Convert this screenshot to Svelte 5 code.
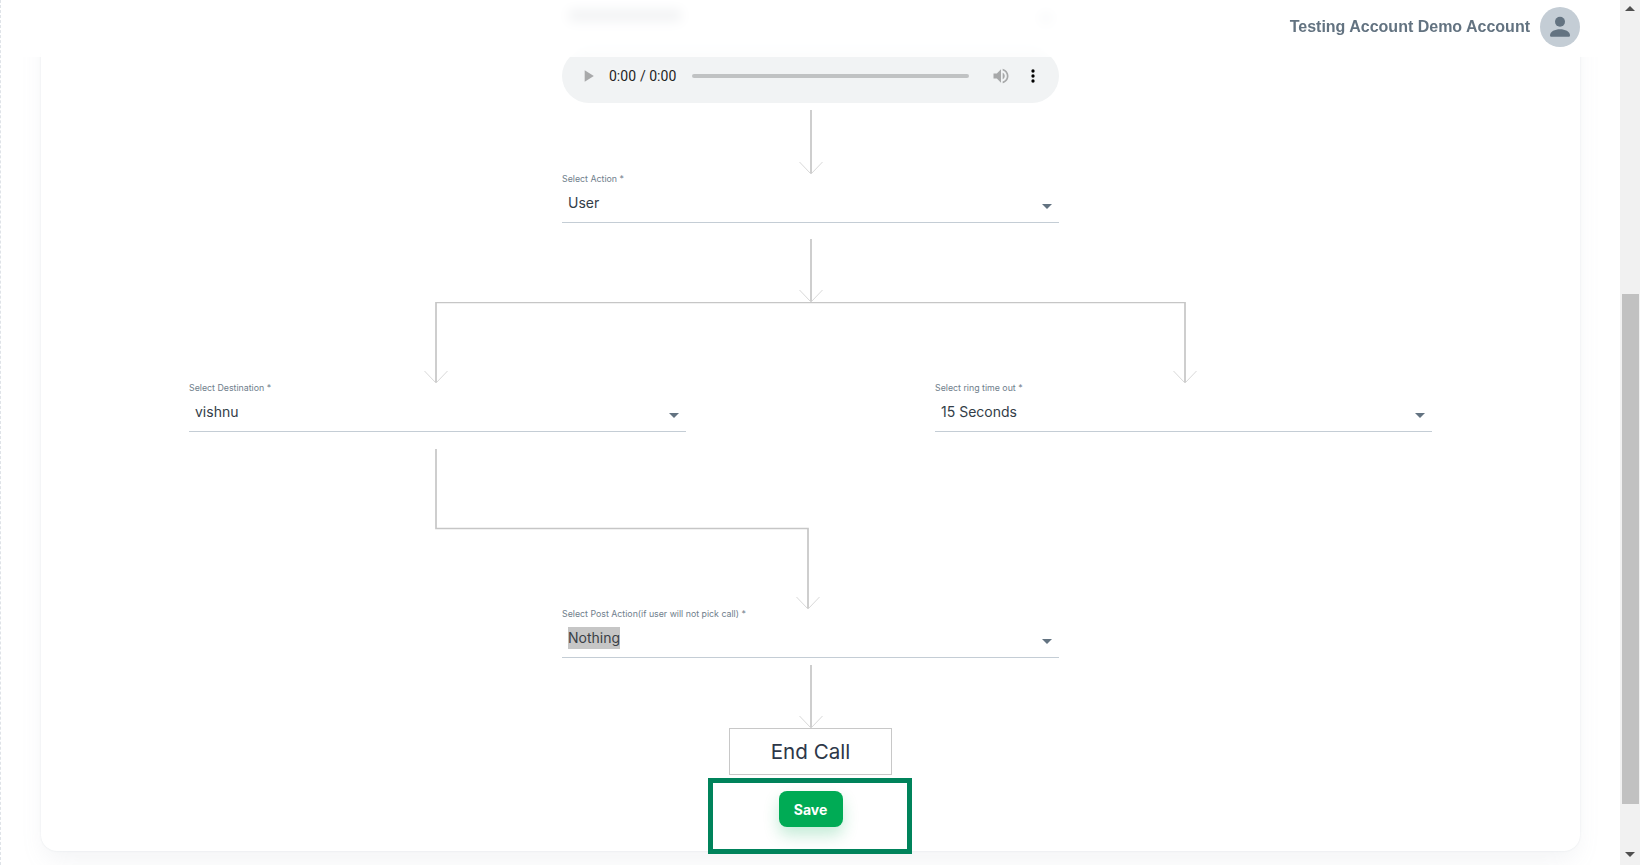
<script>
    const branches = [
        { label: "Select Destination", value: "vishnu" },
        { label: "Select ring time out", value: "15 Seconds" },
    ];
</script>

{#snippet arrow(height)}
    <svg class="arrow" width="26" {height} viewBox="0 0 26 {height}">
        <path class="shaft" d="M13 0V{height}" />
        <path class="head" d="M1.5 {height - 12}L13 {height}L24.5 {height - 12}" />
    </svg>
{/snippet}

{#snippet field(label, value, selected)}
    <div class="field">
        <span class="label">{label} *</span>
        <div class="select">
            <span class="value" class:selected>{value}</span>
            <svg class="caret" width="24" height="24" viewBox="0 0 24 24">
                <path d="M7 10l5 5 5-5z" />
            </svg>
        </div>
    </div>
{/snippet}

<div class="shell">
    <main class="main">
        <header class="topbar">
            <span class="username">Testing Account Demo Account</span>
            <div class="avatar">
                <svg width="40" height="40" viewBox="0 0 40 40">
                    <circle cx="20" cy="14.8" r="5" />
                    <path d="M10 28.2c0-3.8 5-6 10-6s10 2.200 10 6c0 1-.6 1.600-1.600 1.600H11.600C10.600 29.800 10 29.200 10 28.200z" />
                </svg>
            </div>
        </header>

        <section class="card">
            <div class="ghost-select">
                <div class="ghost-value"></div>
                <div class="ghost-caret"></div>
            </div>

            <audio class="player" controls></audio>

            <div class="gap-first">{@render arrow(64)}</div>
            {@render field("Select Action", "User")}
            <div class="gap-second">{@render arrow(63)}</div>

            <div class="branch">
                <svg class="lines" width="1243" height="81" viewBox="0 0 1243 81">
                    <path class="shaft" d="M247 81V0.500H996V81" />
                    <path class="head" d="M235.500 69L247 81L258.500 69" />
                    <path class="head" d="M984.500 69L996 81L1007.500 69" />
                </svg>
                <div class="branch-fields">
                    {#each branches as b}
                        {@render field(b.label, b.value)}
                    {/each}
                </div>
                <svg class="lines join" width="1243" height="160" viewBox="0 0 1243 160">
                    <path class="shaft" d="M247 0V79.500H619V160" />
                    <path class="head" d="M607.500 148L619 160L630.500 148" />
                </svg>
            </div>

            {@render field("Select Post Action(if user will not pick call)", "Nothing", true)}
            <div class="gap-last">{@render arrow(63)}</div>

            <div class="end-call">End Call</div>
            <button class="save" type="button">Save</button>

            <div class="highlight"></div>
        </section>
    </main>

    <aside class="scrollbar">
        <span class="up"></span>
        <div class="track"><div class="thumb"></div></div>
        <span class="down"></span>
    </aside>
</div>

<style>
    :global(body) {
        overflow: hidden;
        background: #fff;
    }

    .shell {
        display: flex;
        height: 865px;
        overflow: hidden;
        font-family: "Inter", "Liberation Sans", sans-serif;
    }

    .main {
        position: relative;
        flex: 1;
        min-width: 0;
        padding: 0 40px;
        border-left: 1px dashed #dfe3e8;
        overflow: hidden;
    }

    .topbar {
        position: absolute;
        top: 0;
        left: 0;
        right: 0;
        z-index: 2;
        height: 57px;
        padding-right: 40px;
        display: flex;
        align-items: center;
        justify-content: flex-end;
        gap: 10px;
        padding-bottom: 4px;
        box-sizing: border-box;
        background: rgba(255, 255, 255, 0.8);
        backdrop-filter: blur(6px);
    }

    .username {
        font-family: "Liberation Sans", sans-serif;
        font-size: 16px;
        font-weight: 700;
        color: #637381;
    }

    .avatar {
        width: 40px;
        height: 40px;
        border-radius: 50%;
        background: #c4cdd5;
        fill: #637381;
    }

    .avatar svg {
        display: block;
    }

    .card {
        position: relative;
        height: 851px;
        box-sizing: border-box;
        display: flex;
        flex-direction: column;
        align-items: center;
        background: #fff;
        border-radius: 16px;
        box-shadow: 0 0 2px rgba(145, 158, 171, 0.2), 0 12px 24px -4px rgba(145, 158, 171, 0.12);
    }

    .ghost-select {
        width: 497px;
        height: 38px;
        display: flex;
        align-items: flex-start;
        justify-content: space-between;
        padding: 10px 8px 0 7px;
        box-sizing: border-box;
        border-bottom: 1px solid #e6e9ec;
    }

    .ghost-value {
        width: 112px;
        height: 11px;
        background: #b4bac1;
    }

    .ghost-caret {
        width: 10px;
        height: 8px;
        margin-top: 4px;
        background: #ccd1d6;
    }

    .player {
        display: block;
        width: 497px;
        height: 54px;
        margin-top: 11px;
    }

    .gap-first {
        margin-top: 7px;
    }

    .gap-second {
        margin-top: 16px;
    }

    .gap-last {
        margin-top: 7px;
    }

    .arrow,
    .lines {
        display: block;
        fill: none;
    }

    .shaft {
        stroke: #c6c6c6;
        stroke-width: 1.7;
    }

    .head {
        stroke: #d8d8d8;
        stroke-width: 1;
    }

    .branch {
        width: 1243px;
    }

    .branch-fields {
        display: flex;
        justify-content: space-between;
    }

    .join {
        margin-top: 17px;
    }

    .field {
        width: 497px;
        height: 49px;
        box-sizing: border-box;
        display: flex;
        flex-direction: column;
        border-bottom: 1px solid #c4cdd5;
    }

    .label {
        font-size: 8.8px;
        line-height: 10px;
        color: #6f7e8c;
    }

    .select {
        position: relative;
        padding: 8px 6px 0;
    }

    .value {
        display: inline-block;
        font-size: 14px;
        line-height: 22px;
        color: #333d48;
    }

    .value.selected {
        background: #c6c6c6;
        color: #3a3f45;
    }

    .caret {
        position: absolute;
        right: 0;
        top: 10px;
        fill: #637381;
    }

    .end-call {
        width: 163px;
        height: 47px;
        box-sizing: border-box;
        display: flex;
        align-items: center;
        justify-content: center;
        border: 1px solid #c8c8c8;
        font-size: 20.6px;
        color: #2d3748;
        background: #fff;
    }

    .save {
        width: 64px;
        height: 36px;
        margin-top: 16px;
        border: 0;
        border-radius: 8px;
        background: #00ab55;
        box-shadow: 0 8px 16px rgba(0, 171, 85, 0.24);
        color: #fff;
        font-family: inherit;
        font-size: 14px;
        font-weight: 700;
    }

    .highlight {
        position: absolute;
        left: 667px;
        top: 778px;
        width: 204px;
        height: 76px;
        box-sizing: border-box;
        border: 5px solid #00835b;
        pointer-events: none;
    }

    .scrollbar {
        position: relative;
        width: 20px;
        flex: none;
        background: #f1f1f1;
    }

    .track {
        height: 100%;
    }

    .thumb {
        margin: 294px 1px 0 2px;
        height: 510px;
        background: #c1c1c1;
    }

    .up,
    .down {
        position: absolute;
        left: 5px;
        border-left: 5px solid transparent;
        border-right: 5px solid transparent;
    }

    .up {
        top: 6px;
        border-bottom: 5px solid #505050;
    }

    .down {
        bottom: 8px;
        border-top: 5px solid #505050;
    }
</style>
